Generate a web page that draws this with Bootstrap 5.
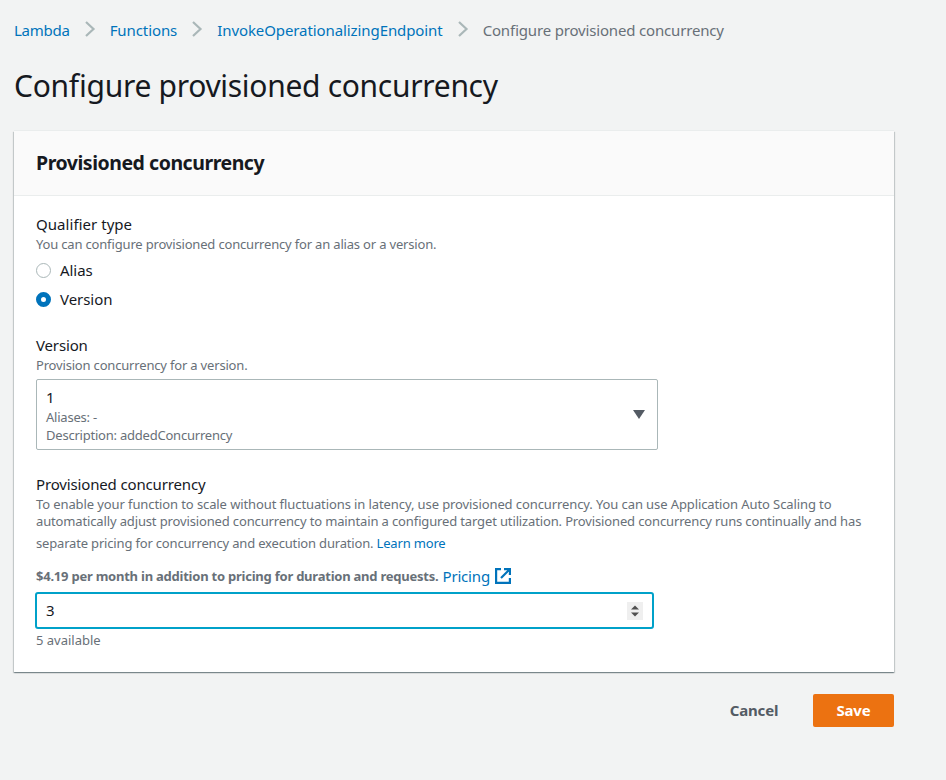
<!DOCTYPE html>
<html lang="en">
<head>
<meta charset="utf-8">
<title>Configure provisioned concurrency</title>
<link href="https://cdn.jsdelivr.net/npm/bootstrap@5.3.0/dist/css/bootstrap.min.css" rel="stylesheet">
<style>
body{background:#f2f3f3;color:#16191f;font-family:"Noto Sans","Open Sans",sans-serif;font-size:15px;line-height:22px;letter-spacing:-.15px;font-feature-settings:"liga" 1}
a{color:#0073bb;text-decoration:none}
.page{width:894px;padding:19px 0 0 14px}
.crumbs{height:22px;white-space:nowrap}
.crumbs a{letter-spacing:-.09px}
.crumbs a:first-child{letter-spacing:-.25px}
.crumbs svg{margin:0 14px 2px}
.muted{color:#687078;letter-spacing:-.17px}
h1{font-size:30px;line-height:40px;font-weight:400;letter-spacing:-.3px;margin:25px 0 25px}
.panel{height:541px;background:#fff;box-shadow:0 1px 1px 0 rgba(0,28,36,.3),1px 1px 1px 0 rgba(0,28,36,.15),-1px 1px 1px 0 rgba(0,28,36,.15),0 -1px 0 #eaeded}
.panel-top{height:65px;background:#fafafa;border-bottom:1px solid #eaeded;padding:20px 22px}
h2{font-size:19.5px;line-height:24px;font-weight:700;letter-spacing:-.47px;margin:0}
.panel-main{padding:17px 22px 0}
.qualifier{letter-spacing:.05px}
.hint{font-size:13px;line-height:18px;color:#687078;letter-spacing:-.18px}
.para span{display:block;line-height:17px;letter-spacing:-.14px}
.para span:first-child{line-height:18px;letter-spacing:-.1px}
.para span:last-child{line-height:26px;letter-spacing:-.175px}
.choice{height:22px;gap:9px;margin-top:7px;letter-spacing:-.05px}
.hint + .choice{margin-top:6px}
.choice .form-check-input{width:15px;height:15px;margin:0;border:1px solid #aab7b8;box-shadow:none}
.choice .form-check-input:checked{background:#fff;border:5px solid #0073bb;background-image:none}
.picker{width:622px;height:71px;border:1px solid #aab7b8;border-radius:2px;padding:6px 12px 0 9px;margin-top:5px;margin-bottom:23px}
.picker .hint{letter-spacing:-.22px}
.picker svg{margin-bottom:7px}
.price{height:24px;margin-top:8px;white-space:nowrap}
.price b.hint{letter-spacing:-.23px}
.price a{letter-spacing:-.18px}
.price svg{margin-left:5px}
.amount{width:619px;height:37px;border:2px solid #00a1c9;border-radius:3px;padding:0 9px;margin:4px 0 2px -1px}
.amount > span:first-child{padding-bottom:2px}
.spin{width:16px;height:18px;background:#efefef}
.avail{letter-spacing:0}
.actions{margin-top:22px;gap:13px}
.btn{font-weight:700;font-size:15px;line-height:22px;letter-spacing:-.2px;border:0;border-radius:2px;height:33px;padding:0 0 2px}
.btn-cancel{color:#545b64;width:92px}
.btn-save,.btn-save:hover{background:#ec7211;color:#fff;width:81px}
</style>
</head>
<body>
<main class="page">
  <nav class="crumbs d-flex align-items-center" aria-label="Breadcrumb">
    <a href="#">Lambda</a>
    <svg width="12" height="18" viewBox="0 0 12 18"><path d="M2 2l7.500 7L2 16" fill="none" stroke="#aab7b8" stroke-width="2.200"/></svg>
    <a href="#">Functions</a>
    <svg width="12" height="18" viewBox="0 0 12 18"><path d="M2 2l7.500 7L2 16" fill="none" stroke="#aab7b8" stroke-width="2.200"/></svg>
    <a href="#">InvokeOperationalizingEndpoint</a>
    <svg width="12" height="18" viewBox="0 0 12 18"><path d="M2 2l7.500 7L2 16" fill="none" stroke="#aab7b8" stroke-width="2.200"/></svg>
    <span class="muted">Configure provisioned concurrency</span>
  </nav>
  <h1>Configure provisioned concurrency</h1>
  <section class="panel">
    <div class="panel-top"><h2>Provisioned concurrency</h2></div>
    <div class="panel-main">
      <div class="qualifier">Qualifier type</div>
      <div class="hint">You can configure provisioned concurrency for an alias or a version.</div>
      <label class="choice d-flex align-items-center"><input class="form-check-input" type="radio" name="q">Alias</label>
      <label class="choice d-flex align-items-center"><input class="form-check-input" type="radio" name="q" checked>Version</label>
      <div class="mt-4">Version</div>
      <div class="hint">Provision concurrency for a version.</div>
      <div class="picker d-flex justify-content-between align-items-start">
        <div><div>1</div><div class="hint">Aliases: -</div><div class="hint">Description: addedConcurrency</div></div>
        <svg class="align-self-center" width="12" height="9" viewBox="0 0 12 9"><path d="M0 0h12L6 9z" fill="#545b64"/></svg>
      </div>
      <div>Provisioned concurrency</div>
      <div class="hint para text-nowrap"><span>To enable your function to scale without fluctuations in latency, use provisioned concurrency. You can use Application Auto Scaling to</span><span>automatically adjust provisioned concurrency to maintain a configured target utilization. Provisioned concurrency runs continually and has</span><span>separate pricing for concurrency and execution duration. <a href="#">Learn more</a></span></div>
      <div class="price d-flex align-items-center"><b class="hint">$4.19 per month in addition to pricing for duration and requests.</b><a href="#" class="ms-1">Pricing</a>
        <svg width="16" height="16" viewBox="0 0 16 16" fill="none" stroke="#0073bb" stroke-width="2.200"><path d="M6 1.100H1.100v13.800h13.800V10M9 1.100h5.900V7M14.500 1.500L6 10"/></svg></div>
      <div class="amount d-flex align-items-center justify-content-between"><span>3</span><span class="spin d-flex align-items-center justify-content-center"><svg width="8" height="12" viewBox="0 0 8 12" fill="#505050"><path d="M0 4.500l4-4 4 4zM0 7.500h8l-4 4z"/></svg></span></div>
      <div class="hint avail">5 available</div>
    </div>
  </section>
  <div class="actions d-flex justify-content-end"><button class="btn btn-cancel">Cancel</button><button class="btn btn-save">Save</button></div>
</main>
<script src="https://cdn.jsdelivr.net/npm/bootstrap@5.3.0/dist/js/bootstrap.bundle.min.js"></script>
</body>
</html>
